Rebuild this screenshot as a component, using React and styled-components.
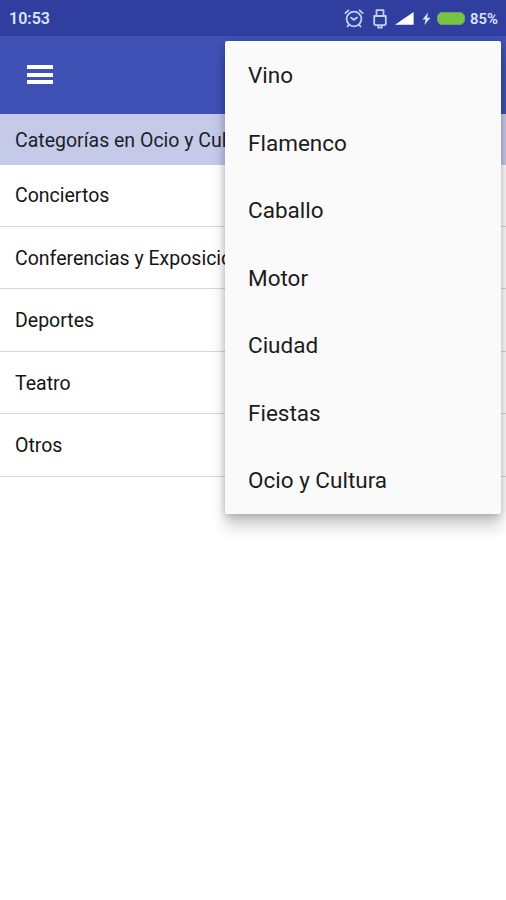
import React,{useState} from 'react';
import styled,{createGlobalStyle} from 'styled-components'

const GlobalStyle = createGlobalStyle`
    *{box-sizing:border-box;}
    body{
        margin:0;
        background:#fff;
        font-family:Roboto,sans-serif;
        overflow:hidden;
    }
`
const Screen = styled.div`
    position:relative;
    height:900px;
    overflow:hidden;
    background:#fff;
`
const StatusBar = styled.div`
    height:36px;
    background:#303f9f;
    color:#dde2fa;
    display:flex;
    align-items:center;
    justify-content:space-between;
    padding:1px 8px 0 9px;
`
const Clock = styled.div`
    font-size:16px;
    font-weight:600;
`
const StatusIcons = styled.div`
    display:flex;
    align-items:center;
`
const Battery = styled.div`
    width:28px;
    height:13px;
    border-radius:5px;
    background:#78c244;
    border:1px solid #6a9c78;
    margin:0 5px 1px 6px;
`
const Percent = styled.div`
    font-size:14.8px;
    font-weight:600;
    width:28px;
`
const Toolbar = styled.div`
    height:78px;
    background:#3f51b5;
    display:flex;
    align-items:center;
    padding:0 0 1px 27px;
`
const MenuButton = styled.button`
    width:26px;
    height:19px;
    padding:0;
    border:0;
    background:none;
    display:flex;
    flex-direction:column;
    justify-content:space-between;
    cursor:pointer;
`
const Bar = styled.span`
    width:26px;
    height:4px;
    background:#fff;
`
const ListTitle = styled.div`
    height:51px;
    background:#c5cae9;
    color:#1d1e2b;
    font-size:19.5px;
    line-height:54px;
    padding-left:15px;
    white-space:nowrap;
`
const Row = styled.div`
    height:62.5px;
    border-bottom:1px solid #d6d6d6;
    color:#151515;
    font-size:19.5px;
    line-height:64.5px;
    padding-left:15px;
    white-space:nowrap;
`
const List = styled.div`
    margin-top:-1px;
`
const Popup = styled.div`
    position:absolute;
    top:41px;
    right:5px;
    width:276px;
    background:#fafafa;
    border-radius:2px;
    box-shadow:0 14px 14px rgba(0,0,0,0.16),0 2px 9px rgba(0,0,0,0.24);
`
const PopupItem = styled.div`
    height:67.57px;
    line-height:69px;
    padding-left:23px;
    font-size:22.5px;
    color:#1c1c1c;
    cursor:pointer;
`
const AlarmSvg = styled.svg`
    margin-right:9px;
`
const LockSvg = styled.svg`
    margin-right:8px;
`
const SignalSvg = styled.svg`
    margin-right:8px;
`

const categories = {
    'Ocio y Cultura':['Conciertos','Conferencias y Exposiciones','Deportes','Teatro','Otros']
}
const sections = ['Vino','Flamenco','Caballo','Motor','Ciudad','Fiestas','Ocio y Cultura']

function AlarmIcon() {
  return (
    <AlarmSvg width="20" height="20" viewBox="0 0 20 20" fill="none" stroke="#c6cef2" strokeWidth="1.8" strokeLinecap="round">
      <circle cx="10" cy="10" r="7.4"/>
      <path d="M1.4 4.2 4.4 1.4M18.6 4.2 15.6 1.4M4.8 15.8 3.6 17.6M15.2 15.8 16.4 17.6M7 8.6 9.8 10.8 13 8.6"/>
    </AlarmSvg>
  )
}

function LockIcon() {
  return (
    <LockSvg width="14" height="20" viewBox="0 0 14 20" fill="none" stroke="#c6cef2" strokeWidth="1.8" strokeLinejoin="round">
      <path d="M3.5 7V1.2h7V7M1.2 7h11.6v8.2l-1 1H2.2l-1-1zM5.2 16.5v2.2h3.6v-2.2"/>
    </LockSvg>
  )
}

function App() {
  let [section] = useState('Ocio y Cultura');

  return (
  <>
  <GlobalStyle/>
  <Screen>
    <StatusBar>
      <Clock>10:53</Clock>
      <StatusIcons>
        <AlarmIcon/>
        <LockIcon/>
        <SignalSvg width="19" height="20" viewBox="0 0 19 20">
          <path d="M0 15.8 18.6 3v12.8z" fill="#fff"/>
        </SignalSvg>
        <svg width="9" height="20" viewBox="0 0 9 20">
          <path d="M6 3.5 .6 10.4h3L2.4 16 8.5 8.8H5.2z" fill="#dde2fa"/>
        </svg>
        <Battery/>
        <Percent>85%</Percent>
      </StatusIcons>
    </StatusBar>
    <Toolbar>
      <MenuButton aria-label="Menú"><Bar/><Bar/><Bar/></MenuButton>
    </Toolbar>
    <ListTitle>Categorías en {section}</ListTitle>
    <List>
      {categories[section].map( name => <Row key={name}>{name}</Row> )}
    </List>
    <Popup>
      {sections.map( name => <PopupItem key={name}>{name}</PopupItem> )}
    </Popup>
  </Screen>
  </>
  )
}

export default React.memo(App);
